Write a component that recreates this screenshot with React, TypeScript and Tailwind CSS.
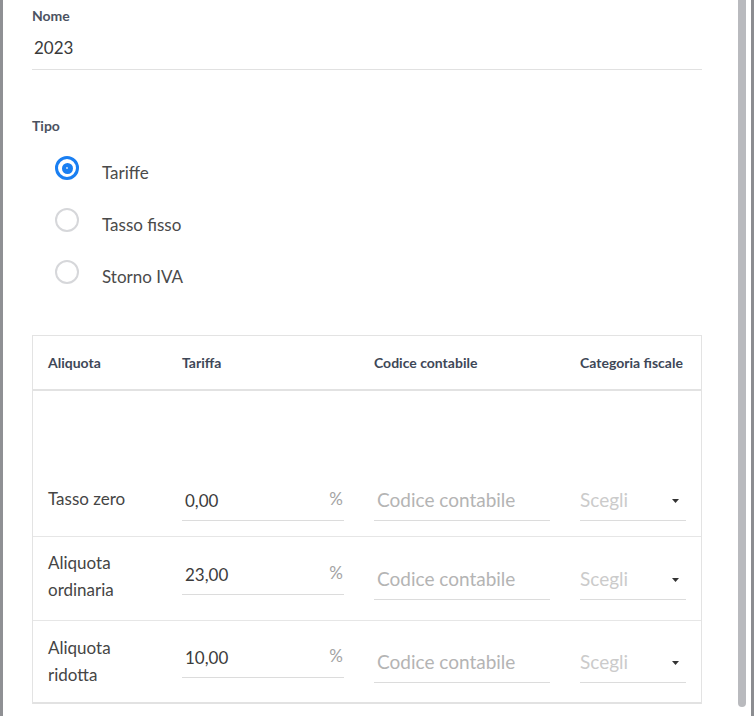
import React from 'react';

type Row = {
  label: string[];
  value: string;
  labelTop: string;
  inputTop: string;
  codTop: string;
  height: string;
  last?: boolean;
};

const rows: Row[] = [
  { label: ['Tasso zero'], value: '0,00', labelTop: 'mt-[22px]', inputTop: 'mt-[18px]', codTop: 'mt-[18px]', height: 'h-[74px]' },
  { label: ['Aliquota', 'ordinaria'], value: '23,00', labelTop: 'mt-[12px]', inputTop: 'mt-[18px]', codTop: 'mt-[23px]', height: 'h-[84px]' },
  { label: ['Aliquota', 'ridotta'], value: '10,00', labelTop: 'mt-[13px]', inputTop: 'mt-[17px]', codTop: 'mt-[22px]', height: 'h-[83px]', last: true },
];

const Radio = ({ checked, label }: { checked?: boolean; label: string }) => (
  <div className="flex items-start h-[52px]">
    {checked ? (
      <div className="mt-[14px] ml-[23px] w-[24px] h-[24px] rounded-full border-[3px] border-[#1a7ff2] flex items-center justify-center">
        <div className="w-[11px] h-[11px] rounded-full bg-[#1a7ff2] flex items-center justify-center">
          <div className="w-[2px] h-[2px] rounded-full bg-[#cfe3fb]" />
        </div>
      </div>
    ) : (
      <div className="mt-[14px] ml-[23px] w-[24px] h-[24px] rounded-full border-2 border-[#d6d7da]" />
    )}
    <span className="mt-[20px] ml-[23px] text-[17px] leading-[22px] text-[#4a4a4a]">{label}</span>
  </div>
);

export default function App() {
  return (
    <div
      className="w-[754px] h-[716px] flex overflow-hidden bg-white"
      style={{ fontFamily: 'Lato, "Open Sans", sans-serif' }}
    >
      <div className="w-[3px] bg-[#8f9094] shrink-0" />
      <div className="w-[735px] shrink-0 pl-[29px] pt-[8px]">
        <div className="w-[670px]">
          <div className="text-[14px] leading-[16px] font-bold text-[#4b5261]">Nome</div>
          <div className="h-[46px] border-b border-[#e1e1e1] pt-[13px] pl-[2px] text-[17px] leading-[22px] text-[#3a3a3a]">
            2023
          </div>

          <div className="mt-[48px] text-[14px] leading-[16px] font-bold text-[#4b5261]">Tipo</div>
          <div className="mt-[8px]">
            <Radio checked label="Tariffe" />
            <Radio label="Tasso fisso" />
            <Radio label="Storno IVA" />
          </div>

          <div className="mt-[37px] border border-b-0 border-[#e3e3e3]">
            <div className="h-[55px] border-b-2 border-[#e2e2e2] flex items-center px-[15px] text-[14px] font-bold text-[#3e4757]">
              <div className="w-[134px]">Aliquota</div>
              <div className="w-[192px]">Tariffa</div>
              <div className="w-[206px]">Codice contabile</div>
              <div className="w-[106px] whitespace-nowrap">Categoria fiscale</div>
            </div>
            <div className="h-[72px]" />
            {rows.map((r) => (
              <div
                key={r.value}
                className={`${r.height} flex items-start px-[15px] ${
                  r.last ? 'border-b-2 border-[#e2e2e2]' : 'border-b border-[#e6e6e6]'
                }`}
              >
                <div className={`w-[134px] ${r.labelTop} text-[17px] leading-[27px] text-[#454545]`}>
                  {r.label.map((l) => (
                    <div key={l}>{l}</div>
                  ))}
                </div>
                <div
                  className={`w-[162px] ${r.inputTop} h-[40px] border-b border-[#dcdcdc] flex items-center justify-between pl-[3px] pr-[1px] text-[17px] text-[#3c3c3c]`}
                >
                  <span>{r.value}</span>
                  <span className="text-[17px] text-[#a3a3a3] -mt-[3px]">%</span>
                </div>
                <div
                  className={`ml-[30px] w-[176px] ${r.codTop} h-[40px] border-b border-[#dcdcdc] flex items-center pl-[3px] text-[19px] text-[#b4b4b4] whitespace-nowrap`}
                >
                  Codice contabile
                </div>
                <div
                  className={`ml-[30px] w-[106px] ${r.codTop} h-[40px] border-b border-[#dcdcdc] flex items-center justify-between pr-[7px] text-[19px] text-[#cbcbcb]`}
                >
                  <span>Scegli</span>
                  <svg width="7" height="4" viewBox="0 0 7 4">
                    <path d="M0 0h7L3.5 4z" fill="#333" />
                  </svg>
                </div>
              </div>
            ))}
          </div>
        </div>
      </div>
      <div className="w-[8px] h-[707px] bg-[#b9babe] rounded-b-[4px] shrink-0" />
      <div className="w-[5px] shrink-0" />
      <div className="w-[3px] bg-[#8c8d91] shrink-0" />
    </div>
  );
}
